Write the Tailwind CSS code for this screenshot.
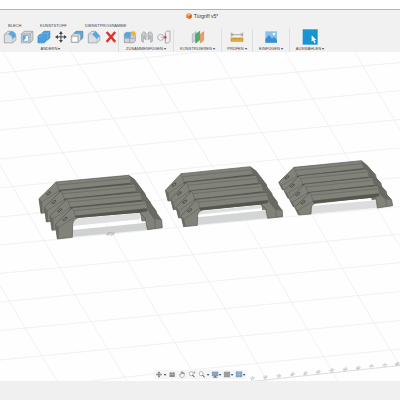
<!DOCTYPE html>
<html lang="de">
<head>
<meta charset="utf-8">
<meta name="viewport" content="width=device-width, initial-scale=1">
<title>Türgriff v5*</title>
<script src="https://cdn.jsdelivr.net/npm/@tailwindcss/browser@4"></script>
</head>
<body class="flex h-screen flex-col overflow-hidden bg-white pt-[9px] font-['Liberation_Sans',Arial,sans-serif] text-[#444]">

<header class="shrink-0 border-t border-[#b4b4b4] bg-[#f1f1f1]">
  <h1 class="flex h-3 items-center justify-center gap-[2px] pl-1 text-[5px] leading-3 font-normal text-[#333]">
    <svg class="size-[6px]" viewBox="0 0 12 12" aria-hidden="true"><path d="M6 0 11.500 3V9L6 12 .5 9V3Z" fill="#ee7c2e"/><path d="M6 0 11.500 3 6 6 .5 3Z" fill="#f9b27b"/><path d="M6 6 11.500 3V9L6 12Z" fill="#dc6520"/></svg>
    Türgriff v5*
  </h1>
  <nav class="flex h-[7px] items-center pl-2 text-[4px] leading-[7px]" aria-label="Arbeitsbereiche">
    <a href="#" class="w-8">BLECH</a>
    <a href="#" class="w-[45px]">KUNSTSTOFF</a>
    <a href="#">DIENSTPROGRAMME</a>
  </nav>

  <div class="flex h-[23px] text-[4px] leading-[7px]">
    <section class="flex w-[119px] shrink-0 flex-col border-r border-[#dedede]">
      <div class="flex h-4 items-center gap-[3px] pl-[3px]">
        <button class="size-[14px]" aria-label="Abrunden"><svg viewBox="0 0 42 42"><path d="M4 13 15 4H25Q39 6 39 20V31L29 39H4Z" fill="#dcdee0" stroke="#8c9196" stroke-width="2"/><path d="M4 13H15Q28 15 29 28V39" fill="none" stroke="#b4b8bc" stroke-width="2"/><path d="M15 13 24 4Q39 6 39 20L29 28Q28 15 15 13Z" fill="#57a8e2"/></svg></button>
        <button class="size-[14px]" aria-label="Schale"><svg viewBox="0 0 42 42"><path d="M4 12 13 4H39V30L31 39H4Z" fill="#d3d8dc" stroke="#8c9196" stroke-width="2"/><path d="M4 12H31V39M31 12 39 4" fill="none" stroke="#94999e" stroke-width="2"/><path d="M9 17H26V34H9Z" fill="#fff" stroke="#5795bf" stroke-width="2"/><path d="M9 17H17V26L9 34Z" fill="#57a8e2"/></svg></button>
        <button class="size-[14px]" aria-label="Kombinieren"><svg viewBox="0 0 42 42"><path d="M15 10 21 4H39V24L32 30H28V33L22 39H3V19L8 14H15Z" fill="#4aa0df" stroke="#317fb8" stroke-width="2"/><path d="M15 10H33V30M33 10 39 4M3 19H15V10" fill="none" stroke="#6bb5e9" stroke-width="2"/></svg></button>
        <button class="size-[14px]" aria-label="Verschieben"><svg viewBox="0 0 42 42"><path d="M21 8V34M8 21H34" stroke="#444" stroke-width="3"/><path d="M21 3 27 12H15ZM21 39 15 30H27ZM3 21 12 15V27ZM39 21 30 27V15Z" fill="#444"/></svg></button>
        <button class="size-[14px]" aria-label="Fläche versetzen"><svg viewBox="0 0 42 42"><path d="M12 10 18 4H39V24L32 30Z" fill="#57a8e2" stroke="#3c83b5" stroke-width="2"/><path d="M4 18 11 11H32V30L25 38H4Z" fill="#dfe2e4" stroke="#8c9196" stroke-width="2"/><path d="M4 18H25V38M25 18 32 11" fill="none" stroke="#8c9196" stroke-width="2"/><path d="M8 22H21V34H8Z" fill="#fff"/></svg></button>
        <button class="size-[14px]" aria-label="Fase"><svg viewBox="0 0 42 42"><path d="M4 13 14 4H26L39 18V31L30 39H4Z" fill="#dcdee0" stroke="#8c9196" stroke-width="2"/><path d="M4 13H16L30 27V39" fill="none" stroke="#b4b8bc" stroke-width="2"/><path d="M16 13 26 4 39 18 30 27Z" fill="#57a8e2"/></svg></button>
        <button class="size-[14px]" aria-label="Löschen"><svg viewBox="0 0 42 42"><path d="M8 6 34 36M34 6 8 36" stroke="#e03030" stroke-width="7"/></svg></button>
      </div>
      <button class="pr-[17px] whitespace-nowrap">ÄNDERN ▾</button>
    </section>
    <section class="flex w-[55px] shrink-0 flex-col border-r border-[#dedede]">
      <div class="flex h-4 items-center gap-[3px] pl-1">
        <button class="size-[14px]" aria-label="Neue Komponente"><svg viewBox="0 0 42 42"><path d="M4 12 9 7H31L37 15V33L31 38H4Z" fill="#d0d4d8" stroke="#8c9196" stroke-width="2"/><path d="M4 12 9 7H23V23H4Z" fill="#57a8e2"/><path d="M20 10V38M4 25H36" stroke="#8b9399" stroke-width="2"/><path d="M31 1 33 6 38 4 36 9 41 11 36 13 38 18 33 16 31 21 29 16 24 18 26 13 21 11 26 9 24 4 29 6Z" fill="#f2ae2e"/></svg></button>
        <button class="size-[14px]" aria-label="Verbindung"><svg viewBox="0 0 42 42"><path d="M5 12 11 5 18 9V29L13 26V17L10 19V37L5 34ZM37 12 31 5 24 9V29L29 26V17L32 19V37L37 34Z" fill="#cdd0d3" stroke="#92979b" stroke-width="2"/></svg></button>
        <button class="size-[14px]" aria-label="Gelenkursprung"><svg viewBox="0 0 42 42"><path d="M25 7 30 3H39V34L34 39H25Z" fill="#eceeef" stroke="#8c9196" stroke-width="2"/><circle cx="11" cy="22" r="9" fill="#f4f4f4" stroke="#8c9196" stroke-width="2"/><path d="M11 22H24" stroke="#999" stroke-width="2"/><path d="M25 11V32" stroke="#e36a6a" stroke-width="2"/><circle cx="25" cy="22" r="4" fill="#df3e3e"/></svg></button>
      </div>
      <button class="whitespace-nowrap">ZUSAMMENFÜGEN ▾</button>
    </section>
    <section class="flex w-12 shrink-0 flex-col items-center border-r border-[#dedede]">
      <button class="my-px size-[14px]" aria-label="Versatzebene"><svg viewBox="0 0 42 42"><path d="M4 13 15 5V30L4 38Z" fill="#d3d6d8" stroke="#a1a6aa" stroke-width="2"/><path d="M14 13 26 4V30L14 39Z" fill="#4dad70" stroke="#3f9660" stroke-width="2"/><path d="M28 13 38 5V31L28 39Z" fill="#ef9d68" stroke="#d98855" stroke-width="2"/></svg></button>
      <button class="whitespace-nowrap">KONSTRUIEREN ▾</button>
    </section>
    <section class="flex w-[31px] shrink-0 flex-col items-center border-r border-[#dedede]">
      <button class="my-px size-[14px]" aria-label="Messen"><svg viewBox="0 0 42 42"><path d="M4 8V20M38 8V20M5 14H37" stroke="#888" stroke-width="2"/><path d="m10 10-5 4 5 4m22-8 5 4-5 4" fill="none" stroke="#888" stroke-width="2"/><path d="M3 24H39V34H3Z" fill="#e5ae3c" stroke="#c5922c" stroke-width="2"/><path d="M9 24V28M15 24V30M21 24V28M27 24V30M33 24V28" stroke="#a87d28" stroke-width="1.500"/></svg></button>
      <button class="whitespace-nowrap">PRÜFEN ▾</button>
    </section>
    <section class="flex w-[37px] shrink-0 flex-col items-center border-r border-[#dedede]">
      <button class="my-px size-[14px]" aria-label="Bild einfügen"><svg viewBox="0 0 42 42"><path d="M4 4H39V38H4Z" fill="#87c3ec"/><path d="M4 27 15 15 24 26 30 20 39 30V38H4Z" fill="#3b8fce"/><circle cx="30" cy="12" r="4" fill="#fff"/></svg></button>
      <button class="whitespace-nowrap">EINFÜGEN ▾</button>
    </section>
    <section class="flex w-10 shrink-0 flex-col items-center">
      <button class="size-4" aria-label="Auswählen"><svg viewBox="0 0 48 48"><path d="M2 1H47V47H2Z" fill="#1494d3"/><path d="M8 8H36V34H8Z" fill="none" stroke="#2ba0da" stroke-width="1.500" stroke-dasharray="4 3"/><path d="M29 19V38L33 34 37 43 41 41 37 33H43Z" fill="#fff"/></svg></button>
      <button class="whitespace-nowrap">AUSWÄHLEN ▾</button>
    </section>
  </div>
</header>

<main class="relative min-h-0 flex-1 overflow-hidden bg-[#fefefe]">
  <svg class="block h-full w-full" viewBox="0 52 400 329" preserveAspectRatio="xMidYMid slice" role="img" aria-label="Drei Stapel Türgriffe auf dem Raster">
    <g fill="none" stroke="#eaebeb" stroke-width=".7">
      <path d="M0 73 200 52M0 101.500 200 81 400 62.500M0 130 200 110 400 90.500M0 159 200 138.500 400 119.500M0 188 200 167 400 148M0 217 200 196 400 177.500M0 245 200 225 400 206.500M0 273.500 200 254 400 234M0 302 200 282.500 400 262.500M0 330.500 200 311 400 291.500M0 360 200 340 400 320.500M90 381 200 369 400 349"/>
      <path d="M0 285 25 328 57 381M0 165 45 242 75 295 127 381M3 52 32 100 78 178 113 235 158 315 198 381M71 52 113 118 143 168 193 255 242 337 267 381M143 52 195 138 248 225 292 303 338 381M215 52 262 133 315 220 358 296 409 381M285 52 330 128 400 247M355 52 400 130"/>
    </g>
    <path d="M237 383 400 365.500" stroke="#cdcdcd" stroke-width=".7"/>
    <g font-size="4" fill="#8e8e8e" text-anchor="middle">
      <text transform="translate(253 379.500) rotate(-35)">25</text><text transform="translate(266 378.500) rotate(-35)">30</text><text transform="translate(279.500 377) rotate(-35)">35</text><text transform="translate(293 375.500) rotate(-35)">40</text><text transform="translate(306 374.500) rotate(-35)">45</text><text transform="translate(319 373) rotate(-35)">50</text><text transform="translate(332.500 371.500) rotate(-35)">55</text><text transform="translate(346 370.500) rotate(-35)">60</text><text transform="translate(359 369) rotate(-35)">65</text><text transform="translate(372 367.500) rotate(-35)">70</text><text transform="translate(385.500 366.500) rotate(-35)">75</text><text transform="translate(398 365) rotate(-35)">80</text>
    </g>

    <defs>
      <g id="h1">
        <path d="M76 178 127 128 345 108 362 120 395 165 397 188 352 194 346 160 328 141 150 157Q130 160 128 178L127 217 82 222Z" fill="#81827a" stroke="#55564f" stroke-width="2"/>
        <path d="M76 178 86 187 87 221 82 222ZM345 108 362 120 395 165 374 163 352 132Z" fill="#696a63"/>
        <path d="M134 152 350 130 352 139 328 143 138 159Z" fill="#55564e"/>
        <path d="M127 128 137 154 86 187M131 137 346 117M352 132 374 163 376 190" fill="none" stroke="#5a5b54" stroke-width="1.500"/>
        <ellipse cx="105" cy="162" rx="7" ry="3" transform="rotate(-38 105 162)" fill="#85867e" stroke="#393a35" stroke-width="2"/>
      </g>
      <g id="h2">
        <path d="M78 168 125 118 333 97 350 110 382 152 383 170 338 175 332 145 315 132 145 150Q130 153 128 165L127 196 86 200Z" fill="#81827a" stroke="#55564f" stroke-width="2"/>
        <path d="M78 168 88 177 91 199 86 200ZM333 97 350 110 382 152 362 149 340 121Z" fill="#696a63"/>
        <path d="M132 143 338 120 340 128 315 134 136 151Z" fill="#55564e"/>
        <path d="M125 118 135 144 88 177M129 127 334 106M340 121 362 149 364 172" fill="none" stroke="#5a5b54" stroke-width="1.500"/>
        <ellipse cx="104" cy="151" rx="7" ry="3" transform="rotate(-38 104 151)" fill="#85867e" stroke="#393a35" stroke-width="2"/>
      </g>
      <g id="h3">
        <path d="M74 172 120 127 322 107 338 120 365 150 368 167 322 174 318 145 310 141 138 160Q124 163 124 175L123 192 86 195Z" fill="#81827a" stroke="#55564f" stroke-width="2"/>
        <path d="M74 172 84 181 90 194 86 195ZM322 107 338 120 365 150 347 148 328 131Z" fill="#696a63"/>
        <path d="M127 152 326 130 328 138 310 143 131 160Z" fill="#55564e"/>
        <path d="M120 127 130 153 84 181M124 136 323 116M328 131 347 148 350 169" fill="none" stroke="#5a5b54" stroke-width="1.500"/>
        <ellipse cx="99" cy="157" rx="7" ry="3" transform="rotate(-38 99 157)" fill="#85867e" stroke="#393a35" stroke-width="2"/>
      </g>
    </defs>

    <g transform="translate(30 165) scale(.3333)">
      <path d="M127 163 330 143V163L127 183Z" fill="#dedfdf"/>
      <path d="M127 195 350 173V195L127 216Z" fill="#d0d1d2"/>
      <use href="#h1" x="-49" y="-77"/><use href="#h1" x="-33" y="-51"/><use href="#h1" x="-16" y="-26"/><use href="#h1"/>
      <path d="m230 207 8-4 12 1 3 3-9 4-6-4-6 4Z" fill="#e5e5e5" stroke="#858585" stroke-width="1.500"/>
    </g>
    <g transform="translate(155 160) scale(.3333)">
      <path d="M127 155 318 135V145L127 164Z" fill="#dedfdf"/>
      <path d="M127 172 336 151V175L127 195Z" fill="#d4d5d5"/>
      <use href="#h2" x="-47" y="-77"/><use href="#h2" x="-31" y="-51"/><use href="#h2" x="-15" y="-26"/><use href="#h2"/>
    </g>
    <g transform="translate(270 150) scale(.3333)">
      <path d="M123 168 320 151V173L123 192Z" fill="#dcdddd"/>
      <use href="#h3" x="-48" y="-75"/><use href="#h3" x="-32" y="-50"/><use href="#h3" x="-16" y="-25"/><use href="#h3"/>
    </g>
  </svg>

  <div class="absolute bottom-[2px] left-1/2 flex h-[9px] -translate-x-1/2 items-center gap-[3px] rounded-xs bg-[#f5f5f5] px-[2px] text-[4px] leading-[7px] text-[#333]" role="toolbar" aria-label="Navigation">
    <button class="flex items-center gap-px" aria-label="Orbit"><svg class="size-[7px]" viewBox="0 0 21 21"><path d="M10.500 1 14 6H7ZM10.500 20 7 15H14ZM1 10.500 6 7V14ZM20 10.500 15 14V7Z" fill="#777"/><circle cx="10.500" cy="10.500" r="4" fill="#999" stroke="#777"/></svg>▾</button>
    <button aria-label="Ansehen"><svg class="size-[7px]" viewBox="0 0 21 21"><path d="M3 6 6 3H9V6H12L14 3H17L19 6V18H3Z" fill="#8d8d8d"/><path d="M3 10H19" stroke="#bbb" stroke-width="2"/></svg></button>
    <button aria-label="Pan"><svg class="size-[7px]" viewBox="0 0 21 21"><path d="M7 19 2 11 4 10 7 13V4L9 3 10 9V2H12V9L14 3 15 4V10L17 6 18 7 17 15 14 19Z" fill="#fff" stroke="#777" stroke-width="1.500"/></svg></button>
    <button aria-label="Zoom"><svg class="size-[7px]" viewBox="0 0 21 21"><circle cx="8" cy="8" r="6" fill="#fff" stroke="#777" stroke-width="1.500"/><path d="m12 12 6 7" stroke="#444" stroke-width="3"/><path d="M18 2V9M15 5 18 2 20 5" fill="none" stroke="#777" stroke-width="1.500"/></svg></button>
    <button class="flex items-center gap-px" aria-label="Zoomfenster"><svg class="size-[7px]" viewBox="0 0 21 21"><circle cx="8" cy="8" r="6" fill="#fff" stroke="#777" stroke-width="1.500"/><path d="m12 12 6 7" stroke="#444" stroke-width="3"/></svg>▾</button>
    <button class="flex items-center" aria-label="Anzeigeeinstellungen"><svg class="size-[7px]" viewBox="0 0 21 21"><path d="M2 3H20V15H2Z" fill="#83aad1" stroke="#777" stroke-width="1.500"/><path d="M8 15H14V18H17V20H5V18H8Z" fill="#777"/></svg>▾</button>
    <button class="flex items-center" aria-label="Raster und Fang"><svg class="size-[7px]" viewBox="0 0 21 21"><path d="M1 2H20V19H1Z" fill="#999"/><path d="M1 7H20M1 13H20M7 2V19M14 2V19" stroke="#acacac"/></svg>▾</button>
    <button class="flex items-center" aria-label="Ansichtsfenster"><svg class="size-[7px]" viewBox="0 0 21 21"><path d="M1 2H20V18H1Z" fill="#7fa5cf" stroke="#6788ab"/><path d="M10.500 2V18M1 10H20" stroke="#b4cae3" stroke-width="1.500"/></svg>▾</button>
  </div>
</main>
<footer class="h-[19px] shrink-0 bg-[#f0f0f0]"></footer>
</body>
</html>
